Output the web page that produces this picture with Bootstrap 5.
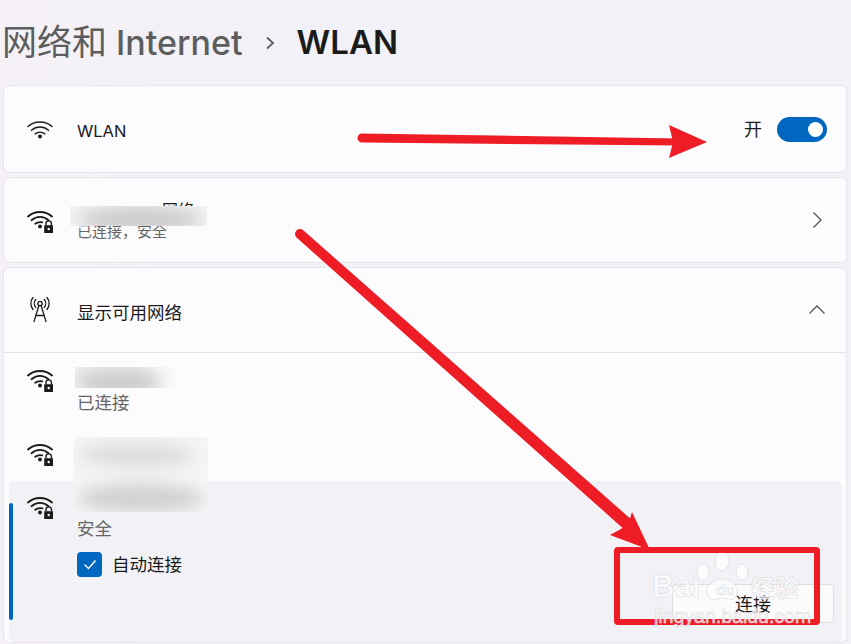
<!DOCTYPE html>
<html lang="zh-CN">
<head>
<meta charset="UTF-8">
<meta name="viewport" content="width=device-width, initial-scale=1.0">
<title>WLAN</title>
<link href="https://cdn.jsdelivr.net/npm/bootstrap@5.3.2/dist/css/bootstrap.min.css" rel="stylesheet">
<script src="https://cdn.jsdelivr.net/npm/bootstrap@5.3.2/dist/js/bootstrap.bundle.min.js"></script>
<style>
html, body { height: 100%; overflow: hidden; }
body {
    background: linear-gradient(90deg, #f5f1f7, #f1f1f7 40%);
    font-family: "Inter", "Noto Sans CJK SC", sans-serif;
    color: #1b1b1b;
    position: relative;
}
.page { padding: 0 4px 0 3px; }
.crumbs { height: 85px; gap: 22px; font-size: 33px; font-weight: 600; line-height: 1; white-space: nowrap; }
.crumbs .parent { color: #5d5d5d; font-weight: 500; font-size: 34px; margin-left: -1px; }
.crumbs .parent b { font-size: 35px; font-weight: 400; }
.panel { background: #fcfcfe; border: 1px solid #e5e5ea; border-radius: 6px; margin-bottom: 4px; }
.row-wlan { height: 88px; }
.row-current { height: 86px; }
.row-head { height: 85px; border-bottom: 1px solid #e5e5e8; }
.row-wlan, .row-current, .row-head { padding: 0 19px 0 23px; }
.row-current { padding-right: 23px; }
.row-head { padding-right: 20px; }
.ico { width: 26px; height: 26px; flex: none; margin-right: 24px; }
.lbl { font-size: 17.500px; line-height: 22px; }
.lbl-latin { font-size: 16.500px; padding-top: 4px; }
.lbl-head { padding-top: 5px; }
.sub { font-size: 17.500px; line-height: 20px; color: #666; }
.sub-tiny { font-size: 15px; margin-top: 2px; }
.toggle-text { font-size: 18px; margin-right: 15px; }
.toggle-pill { width: 50px; height: 25px; border-radius: 13px; background: #0067c0; padding-right: 4px; }
.toggle-knob { width: 15px; height: 15px; border-radius: 50%; background: #fff; }
.net-one { height: 72px; padding: 13px 0 0 23px; }
.net-two { height: 56px; padding: 15px 0 0 23px; }
.net-sel { height: 161px; margin: 0 4px 0 5px; padding: 12px 0 0 18px; background: #f2f2f6; border-radius: 6px; position: relative; }
.net-sel::before { content: ""; position: absolute; left: 0; top: 22px; width: 4px; height: 117px; background: #0067c0; border-radius: 2px; }
.net-text { padding-top: 27px; }
.net-sel .net-text { padding-top: 26px; }
.tick-box { width: 25px; height: 25px; border-radius: 4px; background: #0067c0; margin-right: 10px; }
.auto-line { margin-top: 13px; }
.connect-wrap { position: absolute; right: 8px; bottom: 19px; }
.connect-btn { width: 162px; height: 39px; background: #fbfbfb; border: 1px solid #dedede; border-radius: 5px; font-size: 18px; color: #1b1b1b; padding: 3px 0 0 0; line-height: 1; }
.smudge { position: absolute; overflow: hidden; background: #f4f4f5; }
.smudge i { position: absolute; display: block; background: #c9c9cb; border-radius: 50%; filter: blur(8px); }
.smudge-a { left: 70px; top: 206px; width: 137px; height: 20px; }
.smudge-a i { left: 8px; top: 1px; width: 124px; height: 24px; }
.smudge-b { left: 75px; top: 367px; width: 105px; height: 21px; background: linear-gradient(90deg, #f0f0f1, #f0f0f1 60%, #fcfcfe); }
.smudge-b i { left: 2px; top: 3px; width: 84px; height: 24px; }
.smudge-c { left: 74px; top: 437px; width: 134px; height: 75px; background: #f5f5f6; }
.smudge-c i.up { left: 6px; top: 6px; width: 114px; height: 24px; background: #dcdcde; }
.smudge-c i.down { left: 4px; top: 47px; width: 126px; height: 28px; background: #d0d0d2; }
.peek { position: absolute; left: 162px; top: 202px; font-size: 16px; line-height: 1; }
.marks { position: absolute; left: 0; top: 0; width: 851px; height: 644px; pointer-events: none; }
.mark-word { font-family: "Liberation Sans", sans-serif; fill: #fff; fill-opacity: .7; stroke: #dcdce0; stroke-width: .6; }
.mark-cn { font-family: "Noto Sans CJK SC", sans-serif; fill: #fff; fill-opacity: .7; stroke: #dcdce0; stroke-width: .6; }
.mark-paw { fill: #fff; fill-opacity: .75; stroke: #dcdce0; stroke-width: .8; }
</style>
</head>
<body>
<svg width="0" height="0" class="position-absolute">
    <symbol id="wifi" viewBox="0 0 26 26">
        <g fill="none" stroke="#1b1b1b" stroke-width="1.500" stroke-linecap="round">
            <path d="M1 10.500C7.500 4.500 18.500 4.500 25 10.500"/>
            <path d="M4.500 14.200C9.500 9.800 16.500 9.800 21.500 14.200"/>
            <path d="M8.200 17.800C11 15.600 15 15.600 17.800 17.800"/>
        </g>
        <circle cx="13" cy="20.600" r="2" fill="#1b1b1b"/>
    </symbol>
    <symbol id="wifilock" viewBox="0 0 26 26">
        <g fill="none" stroke="#1b1b1b" stroke-width="1.800" stroke-linecap="round">
            <path d="M1 9.500C7.500 3.500 18.500 3.500 25 9.500"/>
            <path d="M4.500 13.200C9.500 8.800 16.500 8.800 21.500 13.200"/>
            <path d="M8.200 16.800C10.200 15.200 13 14.800 15.400 15.400"/>
        </g>
        <circle cx="13" cy="19.400" r="2" fill="#1b1b1b"/>
        <path d="M17.200 18.200h9v7.800h-9z" fill="#1b1b1b"/>
        <path d="M19 18.200v-1.600a2.700 2.700 0 0 1 5.400 0v1.600" fill="none" stroke="#1b1b1b" stroke-width="1.400"/>
        <circle cx="21.700" cy="22" r="1.200" fill="#fcfcfe"/>
    </symbol>
</svg>

<div class="page">
    <div class="crumbs d-flex align-items-center">
        <span class="parent"><b>网络和</b> Internet</span>
        <svg width="10" height="14" viewBox="0 0 10 14"><path d="M2 1.500l6 5.500-6 5.500" fill="none" stroke="#5d5d5d" stroke-width="1.800"/></svg>
        <span>WLAN</span>
    </div>

    <div class="panel row-wlan d-flex align-items-center">
        <svg class="ico"><use href="#wifi"/></svg>
        <span class="lbl lbl-latin flex-grow-1">WLAN</span>
        <span class="toggle-text">开</span>
        <div class="toggle-pill d-flex align-items-center justify-content-end"><div class="toggle-knob"></div></div>
    </div>

    <div class="panel row-current d-flex align-items-center">
        <svg class="ico"><use href="#wifilock"/></svg>
        <div class="flex-grow-1">
            <div class="lbl">&nbsp;</div>
            <div class="sub sub-tiny">已连接，安全</div>
        </div>
        <svg width="12" height="18" viewBox="0 0 12 18"><path d="M2.500 1.500l7.500 7.500-7.500 7.500" fill="none" stroke="#555" stroke-width="1.300"/></svg>
    </div>

    <div class="panel mb-0">
        <div class="row-head d-flex align-items-center">
            <svg class="ico" viewBox="0 0 26 26">
                <g fill="none" stroke="#1b1b1b" stroke-width="1.300" stroke-linecap="round">
                    <circle cx="13" cy="6.500" r="2.200"/>
                    <path d="M8.800 10.500a6 6 0 0 1 0-8M17.200 2.500a6 6 0 0 1 0 8M6 12.500a9.500 9.500 0 0 1 0-12M20 .5a9.500 9.500 0 0 1 0 12"/>
                    <path d="M11.800 9l-4.800 15.500M14.200 9l4.800 15.500M9 18.500h8"/>
                </g>
            </svg>
            <span class="lbl lbl-head flex-grow-1">显示可用网络</span>
            <svg width="18" height="12" viewBox="0 0 18 12"><path d="M1.500 9.500l7.500-7.500 7.500 7.500" fill="none" stroke="#555" stroke-width="1.300"/></svg>
        </div>

        <div class="net-one d-flex">
            <svg class="ico"><use href="#wifilock"/></svg>
            <div class="net-text sub">已连接</div>
        </div>
        <div class="net-two d-flex">
            <svg class="ico"><use href="#wifilock"/></svg>
        </div>
        <div class="net-sel d-flex">
            <svg class="ico"><use href="#wifilock"/></svg>
            <div class="net-text">
                <div class="sub">安全</div>
                <div class="auto-line d-flex align-items-center">
                    <div class="tick-box d-flex align-items-center justify-content-center">
                        <svg width="14" height="11" viewBox="0 0 14 11"><path d="M1.500 5.500l4 4 7-8" fill="none" stroke="#fff" stroke-width="1.400"/></svg>
                    </div>
                    <span class="lbl">自动连接</span>
                </div>
            </div>
            <div class="connect-wrap"><button class="btn connect-btn" type="button">连接</button></div>
        </div>
    </div>
</div>

<div class="peek">网络</div>
<div class="smudge smudge-a"><i></i></div>
<div class="smudge smudge-b"><i></i></div>
<div class="smudge smudge-c"><i class="up"></i><i class="down"></i></div>

<svg class="marks" viewBox="0 0 851 644">
    <g class="mark-paw">
        <ellipse cx="722" cy="561" rx="7" ry="10"/>
        <ellipse cx="742" cy="572" rx="6" ry="8"/>
        <ellipse cx="703" cy="572" rx="6" ry="8"/>
        <path d="M708 596c-6-8 6-17 14-17s20 9 14 17c-4 6-9 2-14 2s-10 4-14-2z"/>
    </g>
    <text class="mark-word" x="652" y="597" font-size="31" font-weight="700">Bai</text>
    <text class="mark-word" x="716" y="595" font-size="15" font-weight="700">du</text>
    <text class="mark-cn" x="751" y="597" font-size="24" font-weight="700">经验</text>

    <g fill="#ee1c25">
        <path d="M362 133.500L680 138.500L680 145.500L362 142.500A4.500 4.500 0 0 1 362 133.500Z"/>
        <path d="M669 125L707 142L669 158L673 142Z"/>
        <path d="M296.500 237.500A4.500 4.500 0 0 1 303.500 230.500L633 521L626 531Z"/>
        <path d="M632 512L650 550L610 535L628 525Z"/>
    </g>
    <rect x="617" y="550" width="200" height="72" rx="1" fill="none" stroke="#ee1c25" stroke-width="6"/>
    <text class="mark-word" x="654" y="623" font-size="19.500">jingyan.baidu.com</text>
</svg>
</body>
</html>
